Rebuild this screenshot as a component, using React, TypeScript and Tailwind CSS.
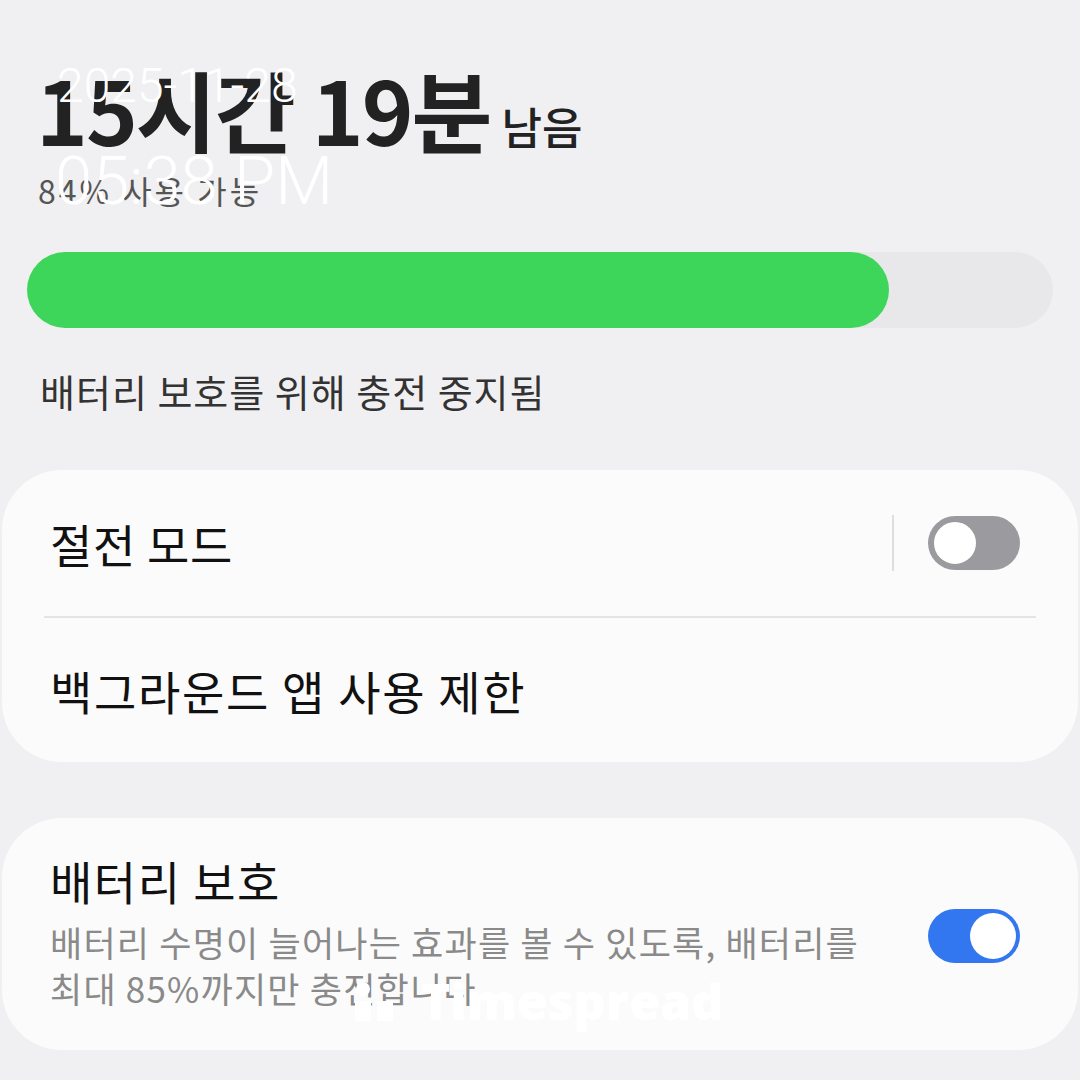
import React from "react";

const KR = { fontFamily: '"Noto Sans CJK KR", "Noto Sans", sans-serif' };

function Toggle({ on }: { on: boolean }) {
  return on ? (
    <div className="w-[92px] h-[54px] rounded-full bg-[#3377f0] flex items-center justify-end px-[4px]">
      <div className="w-[46px] h-[46px] rounded-full bg-white" />
    </div>
  ) : (
    <div className="w-[92px] h-[54px] rounded-full bg-[#9b9b9f] flex items-center px-[3px]">
      <div className="w-[48px] h-[48px] rounded-full bg-white border-[3px] border-[#9b9b9f]" />
    </div>
  );
}

export default function App() {
  return (
    <div className="relative w-[1080px] h-[1080px] overflow-hidden bg-[#f0f0f2]" style={KR}>
      <div className="flex flex-col">
        <div className="pl-[36px] pt-[64px] flex items-end">
          <span className="text-[88px] font-bold leading-none tracking-[-2px] text-[#222]">15시간 19분</span>
          <span className="ml-[11px] mb-[4px] text-[44px] font-medium leading-none text-[#222]">남음</span>
        </div>
        <div className="pl-[38px] mt-[22px] text-[32px] leading-none tracking-[3px] text-[#555]">84% 사용 가능</div>
        <div className="mx-[27px] mt-[46px] h-[76px] rounded-full bg-[#e8e8ea] flex">
          <div className="h-full w-[862px] rounded-full bg-[#3dd65a]" />
        </div>
        <div className="pl-[40px] mt-[44px] text-[38px] leading-none tracking-[1px] text-[#333]">배터리 보호를 위해 충전 중지됨</div>

        <div className="mt-[60px] mx-[2px] rounded-[60px] bg-[#fbfbfb] flex flex-col">
          <div className="h-[146px] flex items-center pl-[48px] pr-[58px]">
            <span className="flex-1 text-[46px] leading-none tracking-[0.7px] text-[#111]">절전 모드</span>
            <div className="w-[2px] h-[56px] bg-[#dedede] mr-[34px]" />
            <Toggle on={false} />
          </div>
          <div className="mx-[42px] h-[2px] bg-[#e4e4e4]" />
          <div className="h-[144px] flex items-center pl-[48px]">
            <span className="text-[46px] leading-none tracking-[1.7px] text-[#111]">백그라운드 앱 사용 제한</span>
          </div>
        </div>

        <div className="mt-[56px] mx-[2px] h-[232px] rounded-[60px] bg-[#fbfbfb] flex items-center pl-[48px] pr-[58px]">
          <div className="flex-1 flex flex-col">
            <span className="text-[46px] leading-none tracking-[1.5px] text-[#111]">배터리 보호</span>
            <span className="mt-[16px] text-[35px] leading-[46px] tracking-[1.2px] text-[#8a8a8a]">
              배터리 수명이 늘어나는 효과를 볼 수 있도록, 배터리를<br />최대 85%까지만 충전합니다
            </span>
          </div>
          <div className="mt-[4px]">
            <Toggle on={true} />
          </div>
        </div>
      </div>

      <div className="absolute left-[57px] top-[62px] text-white text-[48px] font-light leading-none" style={{ fontFamily: 'Roboto, sans-serif' }}>2025-11-28</div>
      <div className="absolute left-[55px] top-[148px] text-white text-[67px] font-light leading-none" style={{ fontFamily: 'Roboto, sans-serif' }}>05:38 PM</div>

      <div className="absolute left-[355px] top-[976px] flex items-center gap-[24px] text-white">
        <svg width="42" height="40" viewBox="0 0 42 40">
          <circle cx="8" cy="8" r="7" fill="white" />
          <rect x="0" y="20" width="16" height="20" fill="white" />
          <rect x="22" y="20" width="16" height="20" fill="white" />
        </svg>
        <span className="text-[50px] font-extrabold leading-none tracking-[0px]" style={{ fontFamily: '"Open Sans", sans-serif' }}>Timespread</span>
      </div>
    </div>
  );
}
